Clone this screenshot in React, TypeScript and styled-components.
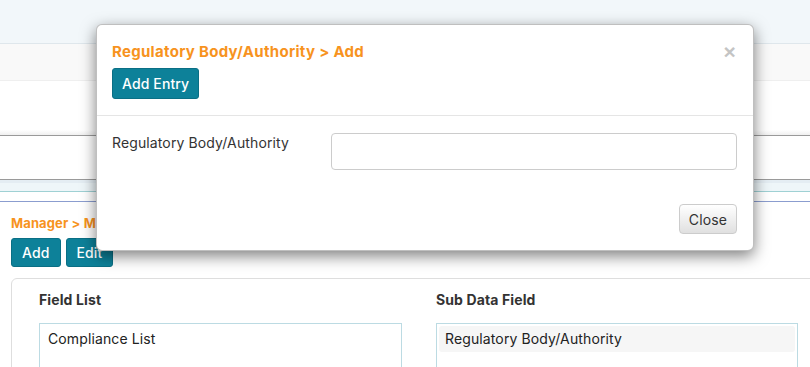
import React from "react";
import styled, { createGlobalStyle } from "styled-components";

const GlobalStyle = createGlobalStyle`
  html, body {
    margin: 0;
    padding: 0;
    background: #ffffff;
    font-family: Inter, "Liberation Sans", Arial, sans-serif;
    letter-spacing: 0.12px;
    color: #333;
    overflow: hidden;
  }
  * { box-sizing: border-box; }
`;

const Page = styled.div`
  position: relative;
  width: 810px;
  height: 367px;
  overflow: hidden;
`;

const TopBar = styled.div`
  height: 44px;
  background: #f2f7fa;
  border-bottom: 1px solid #dfe7ec;
`;

const SubBar = styled.div`
  height: 37px;
  background: #f9f9f9;
  border-bottom: 1px solid #efefef;
`;

const Spacer = styled.div<{ $h: number }>`
  height: ${(p) => p.$h}px;
  background: ${(p) => (p.$h > 10 ? "#fff" : "linear-gradient(#fff, #f0f0f0)")};
`;

const FilterBar = styled.div`
  height: 45px;
  border-top: 1px solid #9a9a9a;
  border-bottom: 1px solid #9a9a9a;
  background: #fff;
`;

const StripeBand = styled.div`
  height: 12px;
  background: #eef6f9;
  border-top: 3px solid #e4edf3;
  border-bottom: 1px solid #9fd1d4;
`;

const BlueRule = styled.div`
  height: 10px;
  border-bottom: 1px solid #8b9dcf;
`;

const Content = styled.div`
  padding: 13px 11px 0;
`;

const Crumb = styled.div`
  font-size: 13px;
  font-weight: 700;
  color: #f7931e;
  line-height: 16px;
`;

const ButtonRow = styled.div`
  display: flex;
  gap: 5px;
  margin-top: 7px;
`;

const TealButton = styled.button`
  height: 29px;
  padding: 0 10px;
  background: #0d8199;
  border: 1px solid #0a6f85;
  border-radius: 3px;
  color: #fff;
  font-family: inherit;
  letter-spacing: inherit;
  font-size: 14px;
  font-weight: 500;
`;

const Panel = styled.div`
  margin-top: 11px;
  margin-right: -20px;
  border: 1px solid #dedede;
  border-radius: 6px;
  padding: 12px 0 0 27px;
  height: 120px;
  display: grid;
  grid-template-columns: 363px 362px;
  column-gap: 34px;
`;

const Column = styled.div`
  display: flex;
  flex-direction: column;
`;

const ColTitle = styled.div`
  font-size: 14px;
  font-weight: 700;
  color: #333;
  line-height: 18px;
`;

const ListBox = styled.div`
  margin-top: 14px;
  border: 1px solid #bcdbe3;
  height: 80px;
  padding: 2px;
`;

const ListItem = styled.div<{ $selected?: boolean }>`
  font-size: 14px;
  color: #222;
  padding: 5px 6px;
  line-height: 16px;
  border-radius: 3px;
  background: ${(p) => (p.$selected ? "#f6f6f6" : "transparent")};
`;

const Modal = styled.div`
  position: absolute;
  left: 96px;
  top: 24px;
  width: 658px;
  height: 227px;
  background: #fff;
  border: 1px solid rgba(0, 0, 0, 0.25);
  border-radius: 6px;
  box-shadow: 0 5px 15px rgba(0, 0, 0, 0.5);
  display: flex;
  flex-direction: column;
`;

const ModalHeader = styled.div`
  position: relative;
  padding: 18px 15px 0;
  height: 91px;
  border-bottom: 1px solid #e5e5e5;
`;

const ModalTitle = styled.div`
  font-size: 15px;
  font-weight: 700;
  letter-spacing: 0.3px;
  color: #f7931e;
  line-height: 18px;
`;

const CloseX = styled.span`
  position: absolute;
  right: 17px;
  top: 15px;
  font-size: 21px;
  font-weight: 700;
  color: #c4c4c4;
  line-height: 24px;
  font-family: "Liberation Sans", Arial, sans-serif;
`;

const EntryButton = styled(TealButton)`
  margin-top: 7px;
  height: 31px;
  padding: 0 9px;
`;

const ModalBody = styled.div`
  padding: 17px 16px 0 15px;
  display: grid;
  grid-template-columns: 219px 1fr;
`;

const FieldLabel = styled.label`
  font-size: 14px;
  color: #333;
  line-height: 18px;
  padding-top: 1px;
`;

const TextInput = styled.input`
  height: 37px;
  border: 1px solid #cccccc;
  border-radius: 4px;
  font-family: inherit;
  font-size: 14px;
`;

const ModalFooter = styled.div`
  margin-top: auto;
  padding: 0 16px 16px;
  display: flex;
  justify-content: flex-end;
`;

const GreyButton = styled.button`
  height: 30px;
  padding: 0 9px;
  background: linear-gradient(#ffffff, #e0e0e0);
  border: 1px solid #cccccc;
  border-radius: 4px;
  font-family: inherit;
  letter-spacing: inherit;
  font-size: 14px;
  color: #333;
`;

export default function App() {
  return (
    <Page>
      <GlobalStyle />
      <TopBar />
      <SubBar />
      <Spacer $h={49} />
      <Spacer $h={5} />
      <FilterBar />
      <StripeBand />
      <BlueRule />
      <Content>
        <Crumb>Manager &gt; Master Data</Crumb>
        <ButtonRow>
          <TealButton>Add</TealButton>
          <TealButton>Edit</TealButton>
        </ButtonRow>
        <Panel>
          <Column>
            <ColTitle>Field List</ColTitle>
            <ListBox>
              <ListItem>Compliance List</ListItem>
            </ListBox>
          </Column>
          <Column>
            <ColTitle>Sub Data Field</ColTitle>
            <ListBox>
              <ListItem $selected>Regulatory Body/Authority</ListItem>
            </ListBox>
          </Column>
        </Panel>
      </Content>

      <Modal>
        <ModalHeader>
          <ModalTitle>Regulatory Body/Authority &gt; Add</ModalTitle>
          <CloseX>×</CloseX>
          <EntryButton>Add Entry</EntryButton>
        </ModalHeader>
        <ModalBody>
          <FieldLabel>Regulatory Body/Authority</FieldLabel>
          <TextInput type="text" />
        </ModalBody>
        <ModalFooter>
          <GreyButton>Close</GreyButton>
        </ModalFooter>
      </Modal>
    </Page>
  );
}
